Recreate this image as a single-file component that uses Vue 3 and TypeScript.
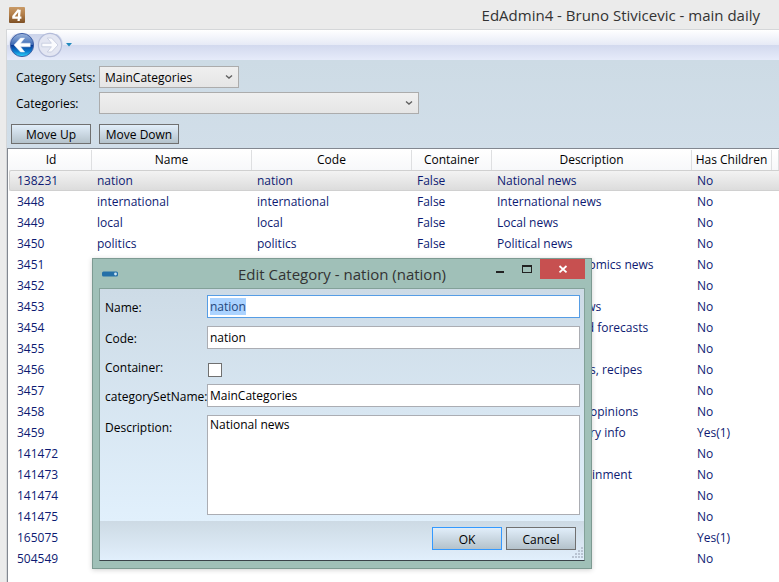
<script setup lang="ts">
import { onMounted, ref } from 'vue'

interface Category {
  id: number
  name: string
  code: string
  container: string
  description: string
  children: string
}

const row = (id: number, name = '', description = '', children = 'No'): Category => ({
  id,
  name,
  code: name,
  container: name ? 'False' : '',
  description,
  children,
})

const categories: Category[] = [
  row(138231, 'nation', 'National news'),
  row(3448, 'international', 'International news'),
  row(3449, 'local', 'Local news'),
  row(3450, 'politics', 'Political news'),
  row(3451, '', 'Business & economics news'),
  row(3452),
  row(3453, '', 'Environment news'),
  row(3454, '', 'Weather info and forecasts'),
  row(3455),
  row(3456, '', 'Food, restaurants, recipes'),
  row(3457),
  row(3458, '', 'Discussions and opinions'),
  row(3459, '', 'Funeral & obituary info', 'Yes(1)'),
  row(141472),
  row(141473, '', 'Fairs and entertainment'),
  row(141474),
  row(141475),
  row(165075, '', '', 'Yes(1)'),
  row(504549),
]

const selectedId = ref(138231)
const categorySet = ref('MainCategories')
const category = ref('')
const form = ref({
  name: 'nation',
  code: 'nation',
  container: false,
  setName: 'MainCategories',
  description: 'National news',
})
const nameInput = ref<HTMLInputElement | null>(null)

onMounted(() => {
  nameInput.value?.focus()
  nameInput.value?.select()
})
</script>

<template>
  <div class="window">
    <header class="titlebar">
      <svg class="app-icon" width="16" height="16" viewBox="0 0 16 16" aria-hidden="true">
        <defs>
          <linearGradient id="brown" x1="0" y1="0" x2="0" y2="1">
            <stop offset="0" stop-color="#c99a66" />
            <stop offset="0.5" stop-color="#b07c48" />
            <stop offset="1" stop-color="#7d4f24" />
          </linearGradient>
        </defs>
        <rect width="16" height="16" rx="1" fill="url(#brown)" />
        <path d="M9.800 2.600 4.400 9.400v1.200h8M10.600 2.600 9.600 14" fill="none" stroke="#fff" stroke-width="2.300" />
      </svg>
      <h1>EdAdmin4 - Bruno Stivicevic - main daily</h1>
    </header>

    <main class="client">
      <nav class="toolbar" aria-label="History">
        <span class="pair">
          <button class="nav" type="button" aria-label="Back">
            <svg width="26" height="26" viewBox="0 0 26 26">
              <defs>
                <linearGradient id="orb" x1="0" y1="0" x2="0" y2="1">
                  <stop offset="0" stop-color="#9eb6dc" />
                  <stop offset="0.48" stop-color="#3d6bb6" />
                  <stop offset="0.52" stop-color="#0a3c97" />
                  <stop offset="0.78" stop-color="#0b7fd0" />
                  <stop offset="1" stop-color="#2ed7fb" />
                </linearGradient>
              </defs>
              <circle cx="13" cy="13" r="11.6" fill="url(#orb)" stroke="#3f5fa6" stroke-width="1" />
              <path d="M5 13 11.500 6h4.200L11.600 11.200h9.600v3.600h-9.600l4.100 5.200h-4.200z" fill="#fff" stroke="#dfe7f2" stroke-width=".5" />
            </svg>
          </button>
          <button class="nav" type="button" aria-label="Forward">
            <svg width="26" height="26" viewBox="0 0 26 26">
              <circle cx="13" cy="13" r="11.6" fill="#e3e6f2" stroke="#b4bcd9" stroke-width="1.2" />
              <path d="M21 13 14.500 6h-4.200l4.100 5.200H4.800v3.600h9.600L10.300 20h4.200z" fill="#fafbfe" stroke="#c3c9dd" stroke-width=".8" />
            </svg>
          </button>
        </span>
        <button class="nav" type="button" aria-label="Recent pages">
          <svg width="8" height="6" viewBox="0 0 8 6"><path d="M1 1h6L4 4.6z" fill="#2089bd" /></svg>
        </button>
      </nav>

      <section class="filters">
        <div class="filter">
          <label for="sets">Category Sets:</label>
          <span class="combo short">
            <select id="sets" v-model="categorySet"><option>MainCategories</option></select>
            <svg width="8" height="6" viewBox="0 0 8 6"><path d="M1 1.5 4 4l3-2.5" /></svg>
          </span>
        </div>
        <div class="filter">
          <label for="cats">Categories:</label>
          <span class="combo long">
            <select id="cats" v-model="category"><option value=""></option></select>
            <svg width="8" height="6" viewBox="0 0 8 6"><path d="M1 1.5 4 4l3-2.5" /></svg>
          </span>
        </div>
        <div class="moves">
          <button class="btn" type="button">Move Up</button>
          <button class="btn" type="button">Move Down</button>
        </div>
      </section>

      <section class="list">
        <table>
          <colgroup>
            <col class="w-id" /><col class="w-name" /><col class="w-name" /><col class="w-flag" />
            <col class="w-desc" /><col class="w-flag" /><col />
          </colgroup>
          <thead>
            <tr>
              <th>Id</th><th>Name</th><th>Code</th><th>Container</th><th>Description</th><th>Has Children</th><th></th>
            </tr>
          </thead>
          <tbody>
            <tr
              v-for="c in categories"
              :key="c.id"
              :class="{ selected: c.id === selectedId }"
              @click="selectedId = c.id"
            >
              <td>{{ c.id }}</td>
              <td>{{ c.name }}</td>
              <td>{{ c.code }}</td>
              <td>{{ c.container }}</td>
              <td>{{ c.description }}</td>
              <td>{{ c.children }}</td>
              <td></td>
            </tr>
          </tbody>
        </table>
      </section>
    </main>

    <div class="dialog" role="dialog" aria-labelledby="dialog-title">
      <header class="dialog-head">
        <svg class="dialog-icon" width="16" height="6" viewBox="0 0 16 6" aria-hidden="true">
          <rect y="0.5" width="16" height="5" rx="1.5" fill="#2470a8" />
          <circle cx="13.5" cy="3" r="1.4" fill="#cfe6f4" />
        </svg>
        <h2 id="dialog-title">Edit Category - nation (nation)</h2>
        <div class="controls">
          <button type="button" aria-label="Minimize">
            <svg width="10" height="10" viewBox="0 0 10 10"><path d="M1 7h8v2H1z" fill="#222" /></svg>
          </button>
          <button type="button" aria-label="Maximize">
            <svg width="10" height="10" viewBox="0 0 10 10"><path d="M0 1h10v8H0zM1 3v5h8V3z" fill="#222" fill-rule="evenodd" /></svg>
          </button>
          <button class="close" type="button" aria-label="Close">
            <svg width="10" height="10" viewBox="0 0 10 10"><path d="M1.500 2l7 6.400M8.500 2l-7 6.400" fill="none" stroke="#fff" stroke-width="1.800" /></svg>
          </button>
        </div>
      </header>
      <form class="body" @submit.prevent>
        <div class="fields">
          <label for="f-name">Name:</label>
          <input id="f-name" ref="nameInput" v-model="form.name" type="text" spellcheck="false" />
          <label for="f-code">Code:</label>
          <input id="f-code" v-model="form.code" type="text" />
          <label for="f-container">Container:</label>
          <input id="f-container" v-model="form.container" type="checkbox" />
          <label for="f-set">categorySetName:</label>
          <input id="f-set" v-model="form.setName" type="text" />
          <label class="top" for="f-desc">Description:</label>
          <textarea id="f-desc" v-model="form.description" spellcheck="false"></textarea>
        </div>
        <footer class="actions">
          <button class="btn default" type="submit">OK</button>
          <button class="btn" type="button">Cancel</button>
          <svg class="grip" width="11" height="11" viewBox="0 0 11 11" aria-hidden="true">
            <path
              d="M9 0h2v2H9zM6 3h2v2H6zM9 3h2v2H9zM3 6h2v2H3zM6 6h2v2H6zM9 6h2v2H9zM0 9h2v2H0zM3 9h2v2H3zM6 9h2v2H6zM9 9h2v2H9z"
              fill="#b9c4d2"
            />
          </svg>
        </footer>
      </form>
    </div>
  </div>
</template>

<style>
body {
  background: #ebebeb;
}
</style>

<style scoped>
.window {
  position: relative;
  display: flex;
  flex-direction: column;
  box-sizing: border-box;
  height: 100vh;
  overflow: hidden;
  padding-left: 6px;
  background: #ebebeb;
  color: #000;
  font: 12px/16px 'Open Sans', 'Noto Sans', sans-serif;
}
button,
input,
select,
textarea {
  box-sizing: border-box;
  margin: 0;
  font: inherit;
  color: inherit;
}
.titlebar {
  display: flex;
  align-items: center;
  justify-content: space-between;
  height: 29px;
  padding: 0 19px 0 3px;
}
h1,
h2 {
  margin: 0;
  color: #333;
  font-size: 15px;
  font-weight: 400;
  line-height: 20px;
}
.client {
  display: flex;
  flex: 1;
  flex-direction: column;
  min-height: 0;
  border: solid #d5d7d9;
  border-width: 1px 0 0 1px;
  background: #cfdde8;
}
.toolbar {
  display: flex;
  flex: none;
  align-items: center;
  gap: 2px;
  height: 30px;
  padding-left: 2px;
  background: linear-gradient(#fff 0%, #e6eaf6 50%, #d2d9ee 50%, #e6ebfa 100%);
}
.pair {
  display: flex;
  gap: 2px;
  border-radius: 13px;
  background: linear-gradient(transparent 2px, #ccd4ea 2px, #dde3f3 20px, transparent 20px);
}
.nav {
  display: flex;
  padding: 0;
  border: 0;
  background: none;
}
.filters {
  display: flex;
  flex: none;
  flex-direction: column;
  gap: 4px;
  padding: 6px 4px 4px;
  background: linear-gradient(#cddbe5, #d1dee9);
}
.filter {
  display: flex;
  align-items: center;
}
.filter label {
  width: 83px;
  padding: 2px 0 0 5px;
  box-sizing: border-box;
  margin-right: 5px;
  white-space: nowrap;
}
.combo {
  display: grid;
  align-items: center;
  height: 22px;
}
.short {
  width: 140px;
}
.long {
  width: 320px;
}
.combo > * {
  grid-area: 1 / 1;
}
.combo select {
  width: 100%;
  height: 22px;
  padding: 2px 5px 0;
  border: 1px solid #acacac;
  border-radius: 0;
  appearance: none;
  background: linear-gradient(#efefef, #e5e5e5);
}
.combo svg {
  justify-self: end;
  margin-right: 6px;
  pointer-events: none;
  fill: none;
  stroke: #606060;
  stroke-width: 1.4;
}
.moves {
  display: flex;
  gap: 8px;
  padding-top: 6px;
}
.btn {
  width: 80px;
  height: 20px;
  padding: 2px 0 0;
  border: 1px solid #707070;
  background: linear-gradient(#e1eefa, #b4c2cb);
  white-space: nowrap;
}
.list {
  flex: 1;
  min-height: 0;
  overflow: hidden;
  padding: 1px 0 0 1px;
  border: solid #828790;
  border-width: 1px 0 0 1px;
  background: #fff;
}
table {
  width: 100%;
  border-collapse: separate;
  border-spacing: 0;
  table-layout: fixed;
}
.w-id {
  width: 83px;
}
.w-name {
  width: 160px;
}
.w-flag {
  width: 80px;
}
.w-desc {
  width: 200px;
}
th {
  box-sizing: border-box;
  height: 20px;
  padding: 0;
  border-right: 1px solid #dedfe1;
  background: linear-gradient(#fff, #f7f8fa);
  font-weight: 400;
  white-space: nowrap;
}
th:first-child {
  padding-left: 2px;
}
td {
  box-sizing: border-box;
  height: 21px;
  padding: 0 5px;
  border: solid transparent;
  border-width: 1px 0;
  color: #0d1a72;
  white-space: nowrap;
}
td:first-child {
  padding-left: 8px;
}
.selected td {
  border-color: #d0d0d0;
  background: linear-gradient(#f3f3f3, #dcdcdc);
}
.selected td:first-child {
  border-left: 1px solid #d0d0d0;
  border-radius: 2px 0 0 2px;
  padding-left: 7px;
}
.dialog {
  position: absolute;
  top: 258px;
  left: 92px;
  box-sizing: border-box;
  width: 500px;
  padding: 0 6px 7px;
  border: 1px solid #7d9a92;
  background: #a0c0b8;
  box-shadow: 0 1px 5px rgba(0, 0, 0, 0.18);
}
.dialog-head {
  display: grid;
  grid-template-columns: 1fr auto 1fr;
  align-items: center;
  height: 29px;
}
.dialog-icon {
  margin-left: 3px;
}
.controls {
  display: flex;
  align-self: start;
  justify-content: flex-end;
}
.controls button {
  display: flex;
  align-items: center;
  justify-content: center;
  width: 27px;
  height: 20px;
  padding: 0;
  border: 0;
  background: none;
}
.controls .close {
  width: 45px;
  background: #c75050;
}
.body {
  border: 1px solid #83a199;
  border-bottom: 1px solid #3b434a;
  background: linear-gradient(#cddbe6, #e1f0fc 232px);
}
.fields {
  display: grid;
  grid-template-columns: 102px 1fr;
  grid-template-rows: 23px 23px 19px 23px 100px;
  row-gap: 8px;
  align-items: center;
  padding: 6px 4px 6px 5px;
}
.fields label {
  padding-top: 2px;
  white-space: nowrap;
}
.fields input[type='text'],
.fields textarea {
  width: 100%;
  height: 23px;
  padding: 0 2px;
  border: 1px solid #abadb3;
  border-radius: 0;
  outline: 0;
  background: #fff;
}
.fields input[type='text']:focus {
  border-color: #569de5;
}
.fields input::selection {
  background: #abd3ff;
  color: #24477c;
}
.fields textarea {
  display: block;
  height: 100px;
  padding: 1px 2px;
  resize: none;
}
.fields input[type='checkbox'] {
  width: 14px;
  height: 14px;
  margin: 6px 0 0 1px;
  border: 1px solid #707070;
  appearance: none;
  background: #fff;
}
.fields .top {
  align-self: start;
  padding-top: 5px;
}
.actions {
  display: flex;
  align-items: flex-start;
  justify-content: flex-end;
  gap: 4px;
  height: 39px;
  box-sizing: border-box;
  padding: 6px 8px 0;
  background: linear-gradient(#cddae4, #e1effc);
}
.actions .btn {
  width: 70px;
  height: 23px;
}
.actions .default {
  border-color: #3399ff;
}
.grip {
  position: absolute;
  right: 8px;
  bottom: 10px;
}
</style>
